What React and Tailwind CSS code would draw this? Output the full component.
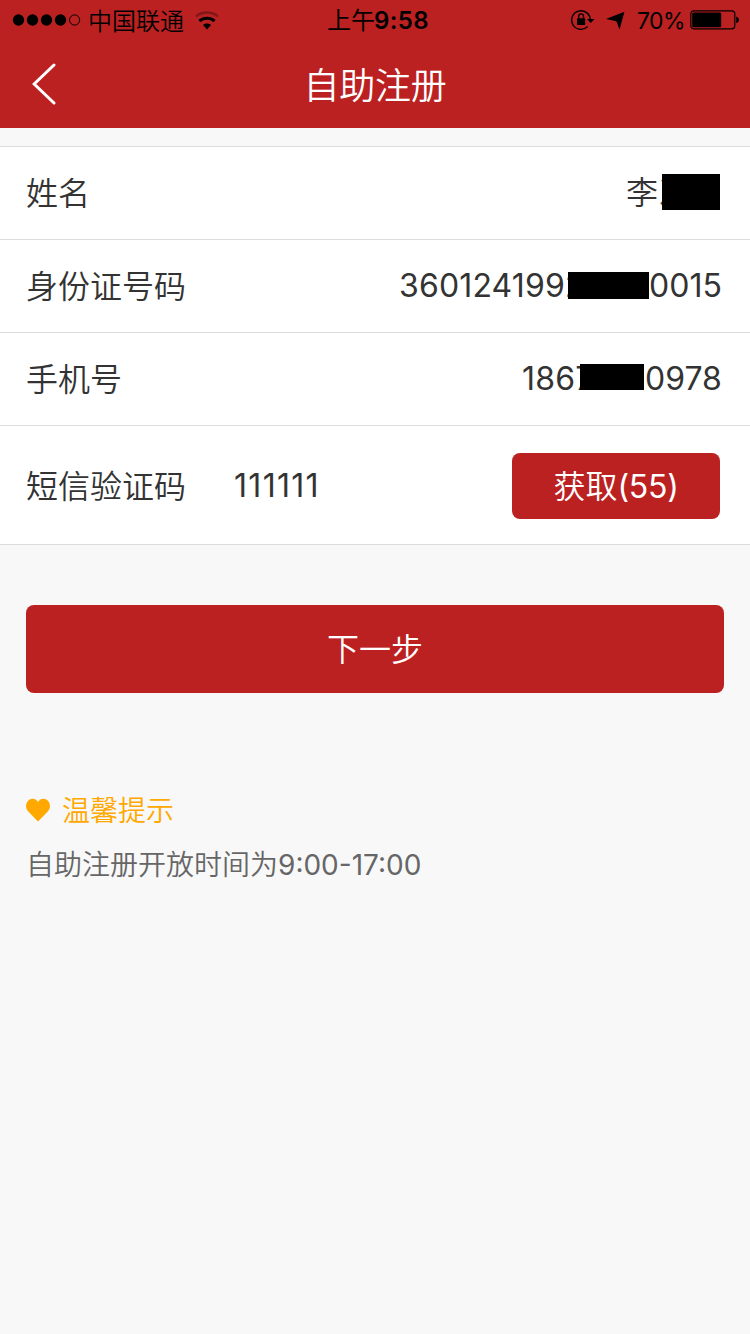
import { useState } from 'react';

const tips = [{ text: '自助注册开放时间为', time: '9:00-17:00' }];

function StatusBar() {
  return (
    <div className="h-10 flex items-center justify-between pl-3 pr-2.5 text-black text-[24px] leading-10">
      <div className="flex-1 flex items-center">
        <svg width="70" height="14" viewBox="0 0 70 14">
          {[6.5, 20.5, 34.5, 48.5].map(x => <circle key={x} cx={x} cy="7" r="5.7" />)}
          <circle cx="62.6" cy="7" r="5.1" fill="none" stroke="black" strokeWidth="1" />
        </svg>
        <span className="ml-1.5 pt-[3px] w-[97px] whitespace-nowrap">中国联通</span>
        <svg className="ml-2.5" width="24" height="19" viewBox="0 0 24 19" fill="none">
          <path d="M1 5.4C7.3 .2 16.7 .2 23 5.4" stroke="black" strokeOpacity=".3" strokeWidth="2.6" />
          <path d="M4.4 10C8.8 6.2 15.2 6.2 19.6 10" stroke="black" strokeWidth="3" />
          <path d="M12 18.6L8 14C10.1 12 13.9 12 16 14Z" fill="black" />
        </svg>
      </div>
      <div className="pl-1 pt-0.5 flex">
        <span className="font-normal -mr-px">上午</span>
        <span className="font-semibold tracking-[0.4px]">9:58</span>
      </div>
      <div className="flex-1 flex items-center justify-end">
        <svg width="25" height="22" viewBox="0 0 25 22" fill="none">
          <path d="M17.6 17.6A9.3 9.3 0 1 1 20.3 11" stroke="black" strokeWidth="1.4" />
          <path d="M17 10H24.6L20.6 14Z" fill="black" />
          <rect x="7" y="9.3" width="8.2" height="6.6" rx=".6" fill="black" />
          <path d="M8.7 10V7.3A2.4 2.4 0 0 1 13.5 7.3V10" stroke="black" strokeWidth="1.4" />
        </svg>
        <svg className="ml-[11px]" width="19" height="20" viewBox="0 0 19 20">
          <path d="M18.4 1.8L13.6 19.4L10.4 11.2L0 9Z" />
        </svg>
        <span className="ml-3 pt-0.5 w-[50px] whitespace-nowrap font-normal text-[23px] tracking-[-0.6px]">70%</span>
        <svg className="ml-[3px]" width="50" height="20" viewBox="0 0 50 20">
          <rect x=".8" y=".8" width="44" height="18" rx="3" fill="none" stroke="black" strokeWidth="1.2" />
          <rect x="2.2" y="2.4" width="29" height="14.8" rx="1.5" />
          <path d="M46.2 6.4Q49 7.2 49 9.8Q49 12.4 46.2 13.2Z" />
        </svg>
      </div>
    </div>
  );
}

function Row({ label, children }) {
  return (
    <div className="h-[93px] border-b border-[#dcdcdc] flex items-center justify-between pl-[26px] pr-[30px]">
      <span className="pt-px">{label}</span>
      <div className="flex items-center">{children}</div>
    </div>
  );
}

export default function App() {
  const [code, setCode] = useState('111111');

  return (
    <div className="min-h-[1334px] bg-[#f8f8f8] text-[#333] font-[350] font-[Inter,'Noto_Sans_CJK_SC',sans-serif]">
      <header className="h-32 bg-[#bc2122]">
        <StatusBar />
        <div className="h-[88px] flex items-center justify-between px-8">
          <button className="w-6 h-11">
            <svg width="24" height="44" viewBox="0 0 24 44" fill="none" stroke="white" strokeWidth="3">
              <path d="M22 3L2.2 22L22 41" strokeLinecap="round" />
            </svg>
          </button>
          <h1 className="pt-[3px] text-white text-[36px] leading-[84px] tracking-[-0.2px]">自助注册</h1>
          <div className="w-6" />
        </div>
      </header>

      <div className="mt-[18px] bg-white border-t border-[#dcdcdc] text-[32px] leading-[48px]">
        {/* masked values: the black block sits on top of the hidden characters */}
        <Row label="姓名">
          <span className="w-9 whitespace-nowrap">李冫</span>
          <span className="relative w-[58px] h-9 mb-0.5 bg-black" />
        </Row>
        <Row label="身份证号码">
          <span className="w-[169px] whitespace-nowrap font-normal tracking-[0.15px]">3601241992</span>
          <span className="relative w-[81px] h-[27px] mb-px bg-black" />
          <span className="w-[71px] whitespace-nowrap font-normal">0015</span>
        </Row>
        <Row label="手机号">
          <span className="w-[58px] whitespace-nowrap font-normal tracking-[0.2px]">1867</span>
          <span className="relative w-16 h-[26px] mb-[5px] bg-black" />
          <span className="w-[76px] pl-px whitespace-nowrap font-normal">0978</span>
        </Row>
        <div className="h-[119px] pt-px border-b border-[#dcdcdc] flex items-center pl-[26px] pr-[30px]">
          <span className="w-[207px] pt-[3px]">短信验证码</span>
          <input
            type="text"
            value={code}
            onChange={e => setCode(e.target.value)}
            className="flex-1 min-w-0 pl-px outline-none font-normal tracking-[1.3px]"
          />
          <button className="w-52 h-[66px] pt-0.5 rounded-lg bg-[#bc2122] text-white">
            获取<span className="font-normal tracking-[-0.3px]">(55)</span>
          </button>
        </div>
      </div>

      <div className="px-[26px] pt-[60px]">
        <button className="w-full h-[88px] pt-0.5 rounded-lg bg-[#bc2122] text-white text-[32px]">下一步</button>
      </div>

      <div className="px-[26px] pt-[97px] text-[28px] leading-10">
        <div className="h-10 flex items-center text-[#ffa800]">
          <svg width="24" height="24" viewBox="0 0 24 24" fill="currentColor">
            <path d="M12 23.4L2 13.2C-1.2 9.6-.3 4.2 3.2 1.8C6.4-.3 10.3.8 12 4C13.7.8 17.6-.3 20.8 1.8C24.3 4.2 25.2 9.6 22 13.2Z" />
          </svg>
          <span className="ml-3 pt-0.5">温馨提示</span>
        </div>
        {tips.map(tip => (
          <p key={tip.text} className="mt-[15px] text-[#666]">
            {tip.text}<span className="font-normal">{tip.time}</span>
          </p>
        ))}
      </div>
    </div>
  );
}
